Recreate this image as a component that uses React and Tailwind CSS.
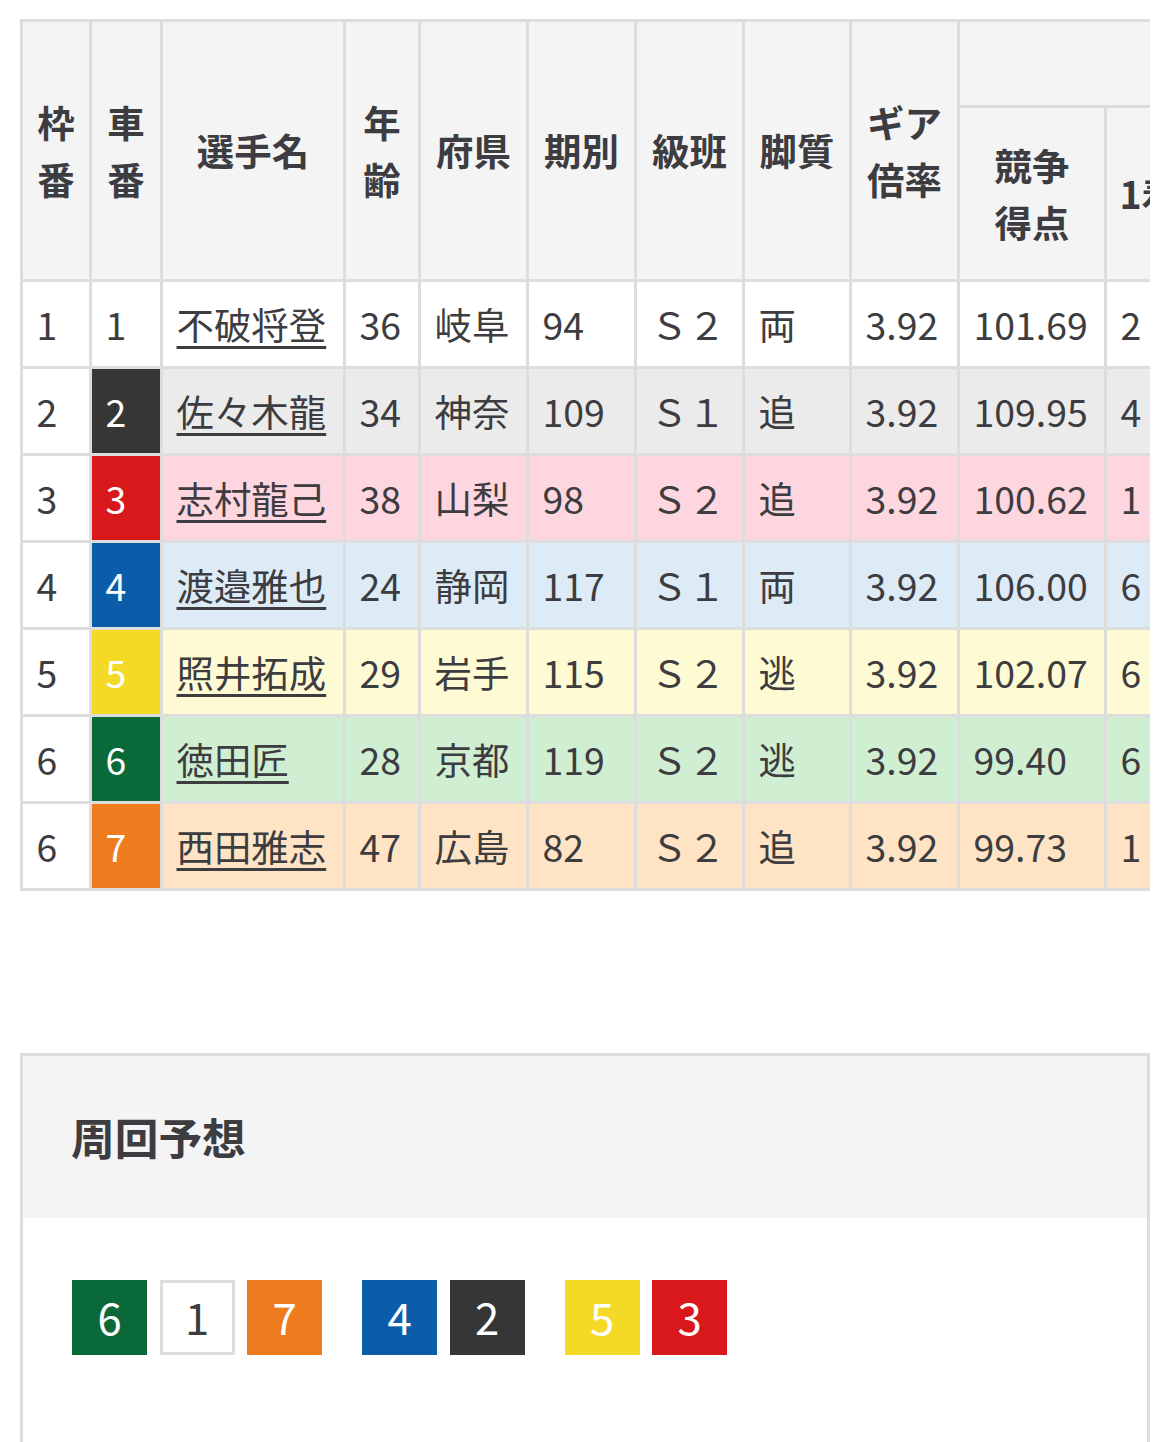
import React from "react";

const rows = [
  { waku: 1, car: 1, name: "不破将登", age: 36, pref: "岐阜", ki: 94, cls: "Ｓ２", leg: "両", gear: "3.92", score: "101.69", r1: "2", r2: "1", r3: "0", r4: "3", w1: "33.3", w2: "50.0", w3: "50.0" },
  { waku: 2, car: 2, name: "佐々木龍", age: 34, pref: "神奈", ki: 109, cls: "Ｓ１", leg: "追", gear: "3.92", score: "109.95", r1: "4", r2: "2", r3: "1", r4: "5", w1: "33.3", w2: "50.0", w3: "58.3" },
  { waku: 3, car: 3, name: "志村龍己", age: 38, pref: "山梨", ki: 98, cls: "Ｓ２", leg: "追", gear: "3.92", score: "100.62", r1: "1", r2: "2", r3: "3", r4: "6", w1: "8.3", w2: "25.0", w3: "50.0" },
  { waku: 4, car: 4, name: "渡邉雅也", age: 24, pref: "静岡", ki: 117, cls: "Ｓ１", leg: "両", gear: "3.92", score: "106.00", r1: "6", r2: "3", r3: "1", r4: "4", w1: "42.9", w2: "64.3", w3: "71.4" },
  { waku: 5, car: 5, name: "照井拓成", age: 29, pref: "岩手", ki: 115, cls: "Ｓ２", leg: "逃", gear: "3.92", score: "102.07", r1: "6", r2: "2", r3: "2", r4: "4", w1: "42.9", w2: "57.1", w3: "71.4" },
  { waku: 6, car: 6, name: "徳田匠", age: 28, pref: "京都", ki: 119, cls: "Ｓ２", leg: "逃", gear: "3.92", score: "99.40", r1: "6", r2: "1", r3: "2", r4: "5", w1: "42.9", w2: "50.0", w3: "64.3" },
  { waku: 6, car: 7, name: "西田雅志", age: 47, pref: "広島", ki: 82, cls: "Ｓ２", leg: "追", gear: "3.92", score: "99.73", r1: "1", r2: "3", r3: "2", r4: "6", w1: "8.3", w2: "33.3", w3: "50.0" },
];

const carCls = {
  1: "bg-white text-[#3c3c41]",
  2: "bg-[#363636] text-white",
  3: "bg-[#d8181b] text-white",
  4: "bg-[#0c5da9] text-white",
  5: "bg-[#f4da27] text-white",
  6: "bg-[#096938] text-white",
  7: "bg-[#ee7c1e] text-white",
};

const rowBg = {
  1: "bg-white",
  2: "bg-[#ebebeb]",
  3: "bg-[#fdd6df]",
  4: "bg-[#ddebf6]",
  5: "bg-[#fefad3]",
  6: "bg-[#d0efd2]",
  7: "bg-[#fee3c4]",
};

const th = "border-r-[3px] border-b-[3px] border-[#dddddd] bg-[#f4f4f4] px-[12.5px] text-center align-middle font-bold whitespace-nowrap";
const td = "border-r-[3px] border-b-[3px] border-[#dddddd] px-[13.5px] text-left align-middle font-normal whitespace-nowrap";

function Sq({ n }) {
  return (
    <div
      className={
        "w-[75px] h-[75px] flex items-center justify-center text-[43.7px] leading-none " +
        (n === 1 ? "border-[3px] border-[#dddddd] " : "") +
        carCls[n]
      }
    >
      {n}
    </div>
  );
}

export default function App() {
  return (
    <div className="min-h-[1442px] bg-white text-[#3c3c41] font-['Noto_Sans_CJK_JP',sans-serif] pt-[19px] overflow-hidden">
      <div className="mx-[20px] w-[1130px] overflow-hidden">
        <table className="w-[1696px] table-fixed border-separate border-spacing-0 border-l-[3px] border-t-[3px] border-[#dddddd] text-[37.44px] leading-[1.5]">
          <colgroup>
            <col className="w-[69px]" />
            <col className="w-[71px]" />
            <col className="w-[183px]" />
            <col className="w-[75px]" />
            <col className="w-[108px]" />
            <col className="w-[108px]" />
            <col className="w-[108px]" />
            <col className="w-[107px]" />
            <col className="w-[108px]" />
            <col className="w-[147px]" />
            <col className="w-[87px]" />
            <col className="w-[87px]" />
            <col className="w-[87px]" />
            <col className="w-[87px]" />
            <col className="w-[87px]" />
            <col className="w-[87px]" />
            <col className="w-[87px]" />
          </colgroup>
          <thead>
            <tr className="h-[86px]">
              <th rowSpan={2} className={th}>枠<br />番</th>
              <th rowSpan={2} className={th}>車<br />番</th>
              <th rowSpan={2} className={th}>選手名</th>
              <th rowSpan={2} className={th}>年<br />齢</th>
              <th rowSpan={2} className={th}>府県</th>
              <th rowSpan={2} className={th}>期別</th>
              <th rowSpan={2} className={th}>級班</th>
              <th rowSpan={2} className={th}>脚質</th>
              <th rowSpan={2} className={th}>ギア<br />倍率</th>
              <th colSpan={8} className={th}>直近成績</th>
            </tr>
            <tr className="h-[174px]">
              <th className={th}>競争<br />得点</th>
              <th className={th}>1着</th>
              <th className={th}>2着</th>
              <th className={th}>3着</th>
              <th className={th}>着外</th>
              <th className={th}>勝率</th>
              <th className={th}>2連</th>
              <th className={th}>3連</th>
            </tr>
          </thead>
          <tbody>
            {rows.map((r, i) => (
              <tr key={i} className="h-[87px]">
                <td className={td + " bg-white"}>{r.waku}</td>
                <td className={td + " " + carCls[r.car]}>{r.car}</td>
                <td className={td + " " + rowBg[r.car]}>
                  <a className="underline decoration-[3px] underline-offset-[6px] cursor-pointer">{r.name}</a>
                </td>
                <td className={td + " " + rowBg[r.car]}>{r.age}</td>
                <td className={td + " " + rowBg[r.car]}>{r.pref}</td>
                <td className={td + " " + rowBg[r.car]}>{r.ki}</td>
                <td className={td + " " + rowBg[r.car]}>{r.cls}</td>
                <td className={td + " " + rowBg[r.car]}>{r.leg}</td>
                <td className={td + " " + rowBg[r.car]}>{r.gear}</td>
                <td className={td + " " + rowBg[r.car]}>{r.score}</td>
                <td className={td + " " + rowBg[r.car]}>{r.r1}</td>
                <td className={td + " " + rowBg[r.car]}>{r.r2}</td>
                <td className={td + " " + rowBg[r.car]}>{r.r3}</td>
                <td className={td + " " + rowBg[r.car]}>{r.r4}</td>
                <td className={td + " " + rowBg[r.car]}>{r.w1}</td>
                <td className={td + " " + rowBg[r.car]}>{r.w2}</td>
                <td className={td + " " + rowBg[r.car]}>{r.w3}</td>
              </tr>
            ))}
          </tbody>
        </table>
      </div>

      <div className="mx-[20px] mt-[162px] border-x-[3px] border-t-[3px] border-[#dddddd]">
        <div className="bg-[#f4f4f4] px-[48px] py-[48px]">
          <h2 className="text-[43.7px] leading-[1.5] font-bold">周回予想</h2>
        </div>
        <div className="pl-[49px] pt-[62px] pb-[120px] flex gap-[40px]">
          <div className="flex gap-[12.5px]">
            <Sq n={6} />
            <Sq n={1} />
            <Sq n={7} />
          </div>
          <div className="flex gap-[12.5px]">
            <Sq n={4} />
            <Sq n={2} />
          </div>
          <div className="flex gap-[12.5px]">
            <Sq n={5} />
            <Sq n={3} />
          </div>
        </div>
      </div>
    </div>
  );
}
